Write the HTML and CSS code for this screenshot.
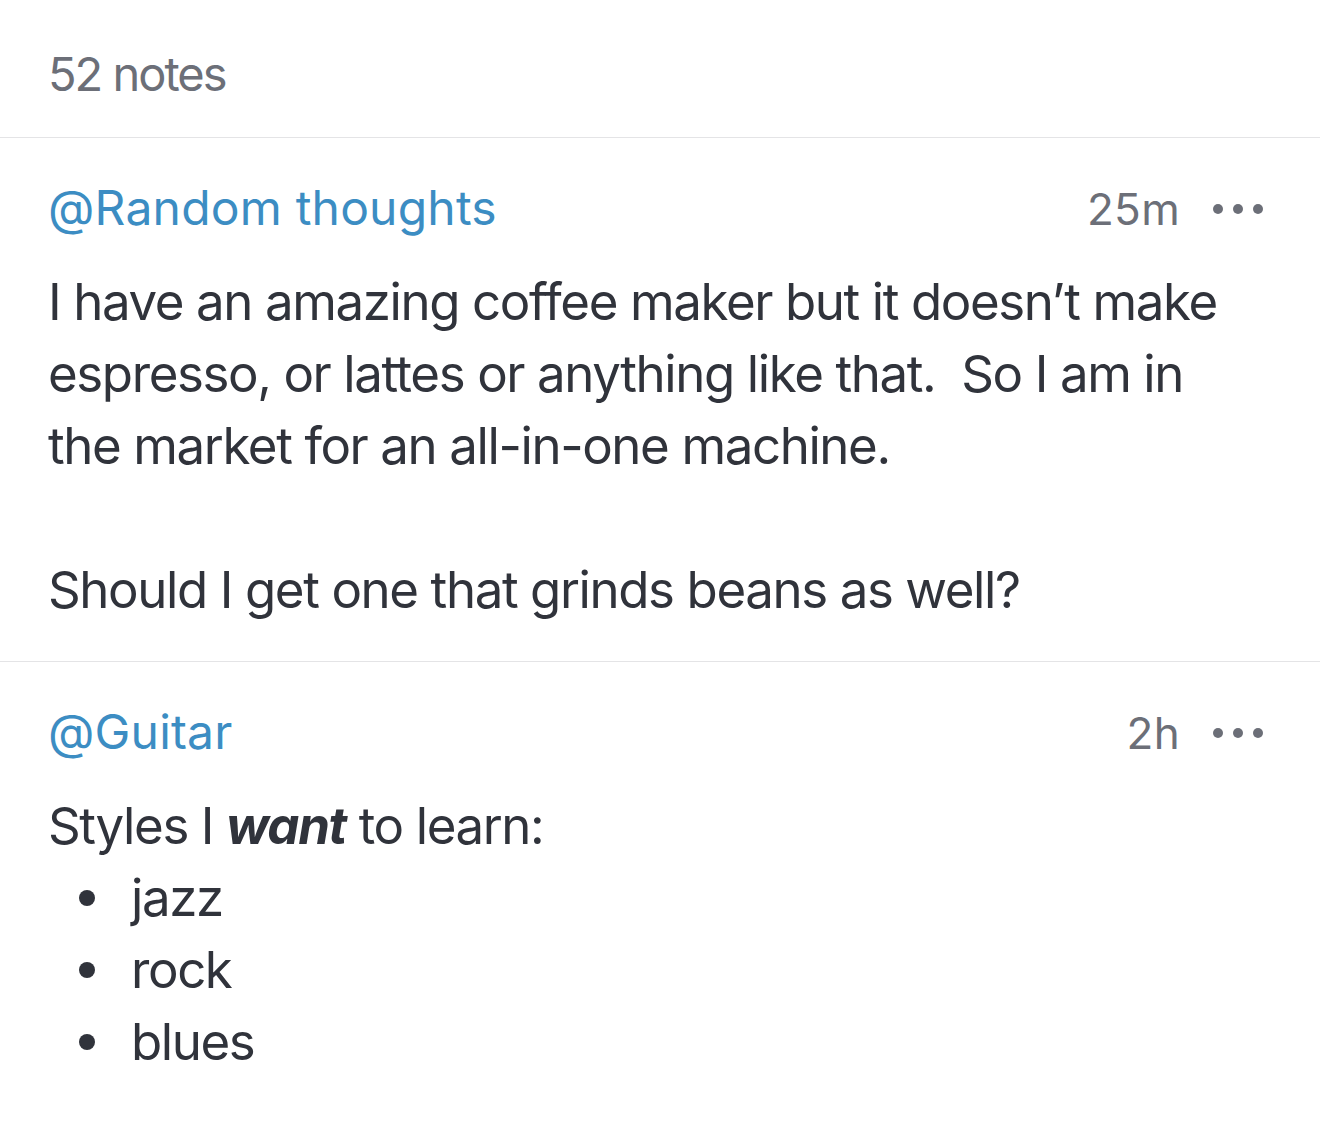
FILE: index.html
```html
<!DOCTYPE html>
<html lang="en">
<head>
  <meta charset="UTF-8">
  <meta name="viewport" content="width=device-width, initial-scale=1.0">
  <title>Notes</title>
  <link rel="stylesheet" href="styles.css">
</head>
<body>

  <!-- Count -->
  <div class="notes-count">52 notes</div>

  <!-- Note list -->
  <div class="note">
    <div class="note-head">
      <a class="note-tag" href="#">@Random thoughts</a>
      <span class="note-time">25m</span>
      <button class="note-more" aria-label="More"><i></i><i></i><i></i></button>
    </div>
    <div class="note-body">
      <p>I have an amazing coffee maker but it doesn’t make espresso, or lattes or anything like that.&nbsp; So I am in the market for an all-in-one machine.</p>
      <p class="gap">Should I get one that grinds beans as well?</p>
    </div>
  </div>

  <div class="note">
    <div class="note-head">
      <a class="note-tag" href="#">@Guitar</a>
      <span class="note-time">2h</span>
      <button class="note-more" aria-label="More"><i></i><i></i><i></i></button>
    </div>
    <div class="note-body">
      <p>Styles I <b><em>want</em></b> to learn:</p>
      <ul>
        <li>jazz</li>
        <li>rock</li>
        <li>blues</li>
      </ul>
    </div>
  </div>

</body>
</html>
```

FILE: styles.css
```css
body {
  margin: 0;
  font-family: Inter, 'Noto Sans', sans-serif;
  background-color: #fff;
  color: #30333b;
}

/* Count Styles */
.notes-count {
  padding: 44px 48px 33px;
  font-size: 47px;
  line-height: 60px;
  letter-spacing: -2px;
  color: #6c6f78;
  border-bottom: 1px solid #e4e4e6;
}

/* Note Styles */
.note {
  padding: 40px 57px 35px 48px;
  border-bottom: 1px solid #e4e4e6;
}

.note:last-child {
  border-bottom: none;
}

.note-head {
  display: flex;
  align-items: baseline;
  line-height: 60px;
}

.note-tag {
  flex: 1;
  font-size: 48px;
  letter-spacing: 0.2px;
  color: #3c8dc3;
  text-decoration: none;
}

.note-time {
  font-size: 44px;
  letter-spacing: 0.3px;
  color: #6c6f78;
}

.note-more {
  display: flex;
  gap: 10px;
  align-self: center;
  margin-left: 33px;
  padding: 0;
  background: transparent;
  border: none;
  cursor: pointer;
}

.note-more i {
  width: 10px;
  height: 10px;
  border-radius: 50%;
  background-color: #6c6f78;
}

.note-body {
  margin-top: 27px;
  font-size: 51px;
  line-height: 72px;
  letter-spacing: -1.4px;
}

.note-body p {
  margin: 0;
}

.note-body p.gap {
  margin-top: 72px;
}

.note-body ul {
  margin: 0;
  padding: 0;
  list-style: none;
}

.note-body li {
  display: flex;
  align-items: center;
}

.note-body li::before {
  content: '';
  width: 16px;
  height: 16px;
  margin: 0 36px 0 31px;
  border-radius: 50%;
  background-color: #30333b;
}
```
